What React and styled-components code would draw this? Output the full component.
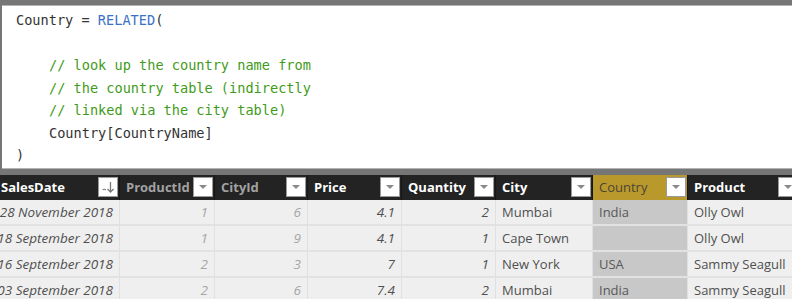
import React from "react";
import styled, { createGlobalStyle } from "styled-components";

const GlobalStyle = createGlobalStyle`
  body {
    margin: 0;
    overflow: hidden;
    background: #ffffff;
  }
`;

const Page = styled.div`
  width: 792px;
  height: 299px;
  overflow: hidden;
  background: #767676;
  padding-top: 5px;
  box-sizing: border-box;
`;

const Editor = styled.div`
  margin: 0 0 6px 2px;
  height: 159px;
  background: #ffffff;
  border-top: 1px solid #b4b4b4;
  border-bottom: 1px solid #b4b4b4;
  padding: 3px 0 0 14px;
  font-family: "DejaVu Sans Mono", "Liberation Mono", monospace;
  font-size: 13.6px;
  line-height: 22.5px;
  color: #333333;
  white-space: pre;
`;

const Line = styled.div`
  height: 22.5px;
  padding-left: ${(p) => (p.indent ? "33px" : "0")};
  color: ${(p) => (p.comment ? "#3f9b20" : "#333333")};
`;

const Fn = styled.span`
  color: #3a72c6;
`;

const Table = styled.div`
  margin-left: -5px;
  display: grid;
  grid-template-columns: 125px 95px 93px 94px 94px 97px 95px 112px;
  font-family: "Open Sans", "Noto Sans", sans-serif;
`;

const HeadCell = styled.div`
  height: 25px;
  background: ${(p) => (p.active ? "#ba992c" : "#232323")};
  border-right: 1px solid #161616;
  display: flex;
  align-items: flex-start;
  justify-content: space-between;
  padding: 0 1px 0 6px;
  box-sizing: border-box;
  font-size: 13px;
  color: ${(p) => (p.active ? "#4a4536" : p.hidden ? "#a2a2a2" : "#ffffff")};
  span {
    line-height: 25px;
    font-weight: ${(p) => (p.active ? 400 : 700)};
  }
`;

const FilterButton = styled.div`
  width: 20px;
  height: 20px;
  margin-top: 2px;
  background: #ffffff;
  border: 1px solid #9a9a9a;
  box-sizing: border-box;
  display: flex;
  align-items: center;
  justify-content: center;
`;

const Cell = styled.div`
  height: 24px;
  display: flex;
  justify-content: ${(p) => (p.num ? "flex-end" : "flex-start")};
  background: ${(p) => (p.selected ? "#c8c8c8" : "#efefef")};
  border-right: 1px solid #e0e0e0;
  border-bottom: 2px solid #e2e2e2;
  padding: ${(p) => (p.num ? "0 6px 0 0" : "0 0 0 6px")};
  font-size: ${(p) => (p.num ? "13.5px" : "13px")};
  line-height: 24px;
  white-space: nowrap;
  overflow: hidden;
  font-style: ${(p) => (p.num ? "italic" : "normal")};
  color: ${(p) => (p.faint ? "#a6a6a6" : p.selected ? "#585858" : "#505050")};
  span {
    flex: none;
  }
`;

const columns = [
  { name: "SalesDate", sort: true },
  { name: "ProductId", hidden: true },
  { name: "CityId", hidden: true },
  { name: "Price" },
  { name: "Quantity" },
  { name: "City" },
  { name: "Country", active: true },
  { name: "Product" },
];

const rows = [
  ["28 November 2018", "1", "6", "4.1", "2", "Mumbai", "India", "Olly Owl"],
  ["18 September 2018", "1", "9", "4.1", "1", "Cape Town", "", "Olly Owl"],
  ["16 September 2018", "2", "3", "7", "1", "New York", "USA", "Sammy Seagull"],
  ["03 September 2018", "2", "6", "7.4", "2", "Mumbai", "India", "Sammy Seagull"],
];

const DropIcon = () => (
  <svg width="10" height="6" viewBox="0 0 10 6">
    <polygon points="1,1 9,1 5,5" fill="#8a8a8a" />
  </svg>
);

const SortIcon = () => (
  <svg width="14" height="14" viewBox="0 0 14 14">
    <line x1="1.5" y1="9.5" x2="5" y2="9.5" stroke="#8a8a8a" strokeWidth="1.3" />
    <line x1="9.5" y1="2" x2="9.5" y2="12" stroke="#777777" strokeWidth="1.3" />
    <polyline points="6.5,9 9.5,12 12.5,9" fill="none" stroke="#777777" strokeWidth="1.3" />
  </svg>
);

const App = () => (
  <Page>
    <GlobalStyle />
    <Editor>
      <Line>
        Country = <Fn>RELATED</Fn>(
      </Line>
      <Line> </Line>
      <Line indent comment>// look up the country name from</Line>
      <Line indent comment>// the country table (indirectly</Line>
      <Line indent comment>// linked via the city table)</Line>
      <Line indent>Country[CountryName]</Line>
      <Line>)</Line>
    </Editor>
    <Table>
      {columns.map((c) => (
        <HeadCell key={c.name} active={c.active} hidden={c.hidden}>
          <span>{c.name}</span>
          <FilterButton>{c.sort ? <SortIcon /> : <DropIcon />}</FilterButton>
        </HeadCell>
      ))}
      {rows.map((r, i) =>
        r.map((v, j) => (
          <Cell
            key={i + "-" + j}
            num={j <= 4}
            faint={j === 1 || j === 2}
            selected={j === 6}
          >
            <span>{v}</span>
          </Cell>
        ))
      )}
    </Table>
  </Page>
);

export default App;
